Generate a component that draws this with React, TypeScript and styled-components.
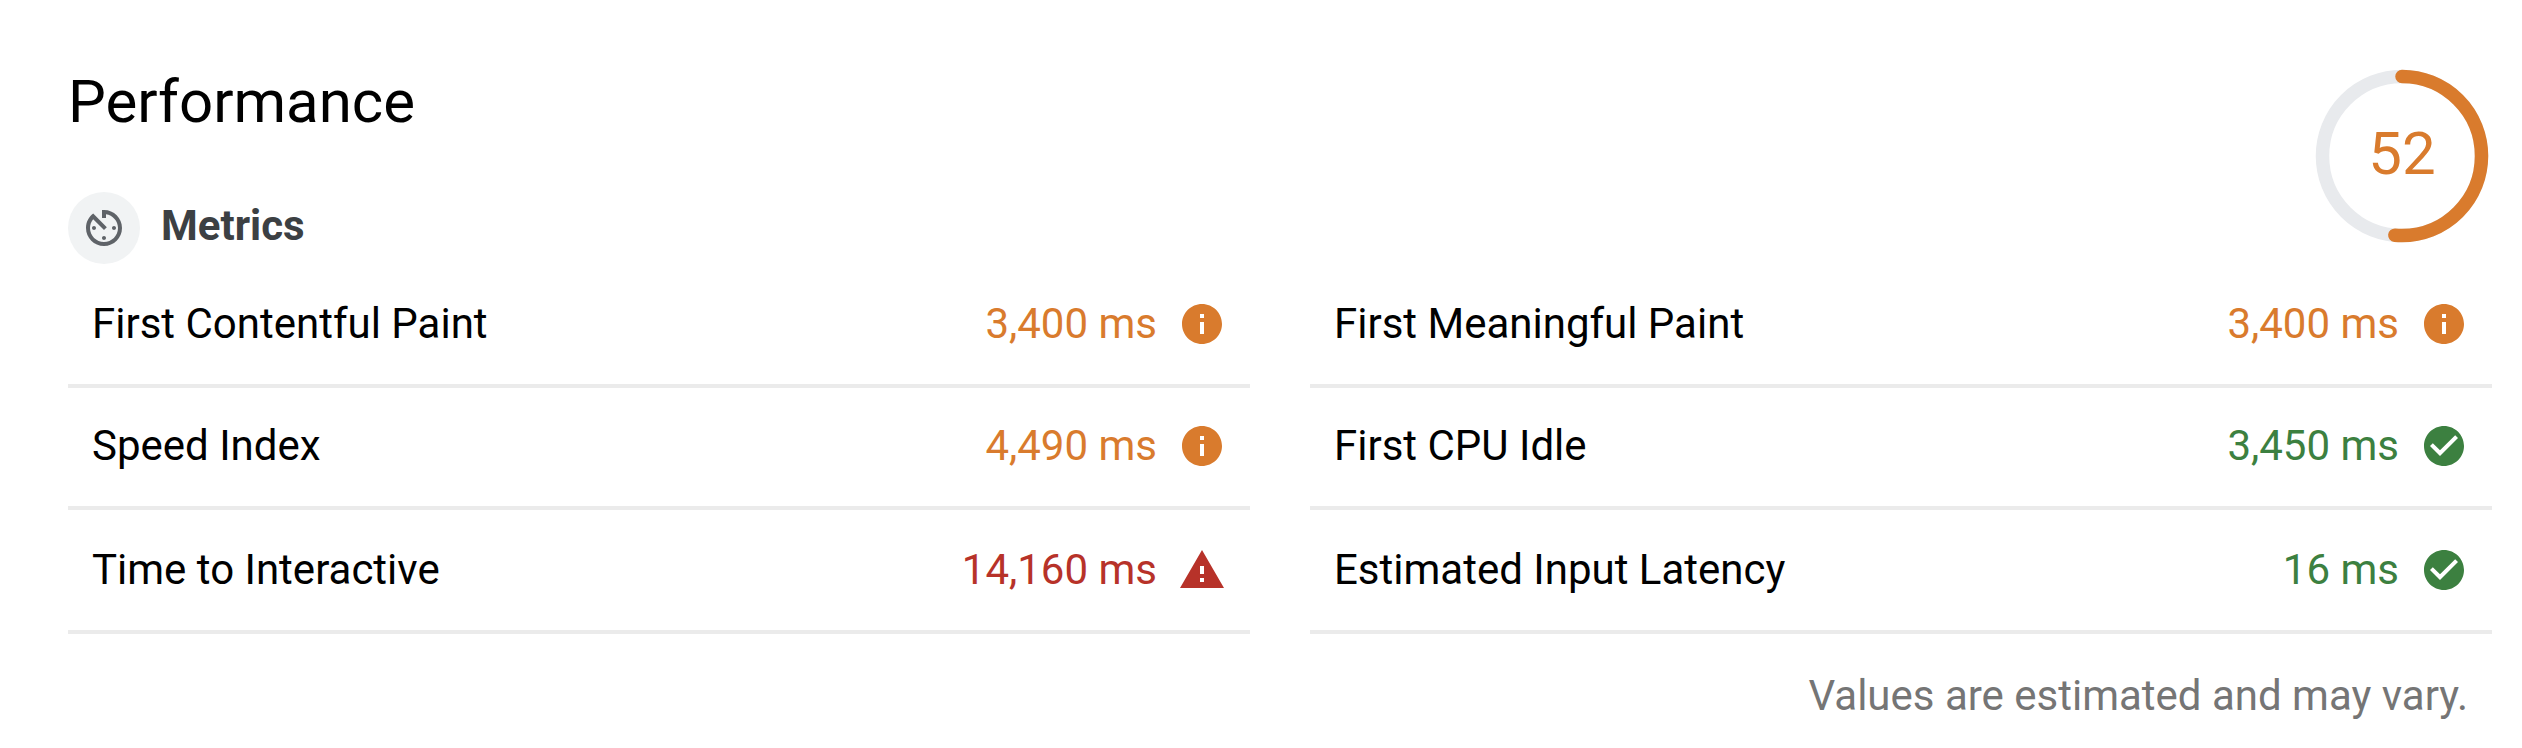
import React from "react";
import styled, { createGlobalStyle } from "styled-components";

type Rating = "pass" | "average" | "fail";

const ratingColors: Record<Rating, string> = {
  pass: "#3c8040",
  average: "#d97b2d",
  fail: "#b73229",
};

const ratingPaths: Record<Rating, string> = {
  pass: "M24 4C12.95 4 4 12.95 4 24c0 11.04 8.95 20 20 20 11.04 0 20-8.96 20-20 0-11.05-8.96-20-20-20zm-4 30L10 24l2.83-2.83L20 28.34l15.17-15.17L38 16 20 34z",
  average:
    "M24 4C12.95 4 4 12.95 4 24s8.95 20 20 20 20-8.95 20-20S35.05 4 24 4zm2 30h-4V22h4v12zm0-16h-4v-4h4v4z",
  fail: "M2 42h44L24 4 2 42zm24-6h-4v-4h4v4zm0-8h-4v-8h4v8z",
};

const GlobalStyle = createGlobalStyle`
  body {
    margin: 0;
    background: #fff;
  }
`;

const Page = styled.main`
  box-sizing: border-box;
  height: 748px;
  padding: 66px 30px 0 68px;
  overflow: hidden;
  background: #fff;
  color: #000;
  font-family: Roboto, "Liberation Sans", sans-serif;
  font-size: 42px;
  line-height: 48px;
`;

const Header = styled.header`
  display: flex;
  justify-content: space-between;
  height: 198px;
`;

const Headings = styled.div`
  display: flex;
  flex-direction: column;
  justify-content: space-between;
`;

const Title = styled.h1`
  margin: 0;
  padding-top: 1px;
  font-size: 60px;
  font-weight: 400;
  line-height: 70px;
`;

const GroupHeader = styled.div`
  display: flex;
  align-items: center;
  gap: 21px;
`;

const GroupIcon = styled.span`
  display: flex;
  align-items: center;
  justify-content: center;
  width: 72px;
  height: 72px;
  border-radius: 50%;
  background: #f1f3f4;
  color: #5f6368;
`;

const GroupTitle = styled.h2`
  margin: 0;
  padding-bottom: 4px;
  color: #3c4043;
  font-size: 42px;
  font-weight: 700;
  line-height: 48px;
`;

const Gauge = styled.div`
  display: grid;
  place-items: center;
  width: 180px;
  height: 180px;

  > * {
    grid-area: 1 / 1;
  }
`;

const Score = styled.span`
  padding-bottom: 4px;
  color: ${ratingColors.average};
  font-size: 60px;
  line-height: 70px;
`;

const Columns = styled.div`
  display: grid;
  grid-template-columns: 1fr 1fr;
  column-gap: 60px;
`;

const Metric = styled.div<{ $height: number }>`
  box-sizing: border-box;
  display: flex;
  align-items: flex-end;
  height: ${(p) => p.$height}px;
  padding: 0 24px 36px;
  border-bottom: 4px solid #ebebeb;
`;

const MetricName = styled.span`
  flex: 1;
`;

const MetricValue = styled.span<{ $rating: Rating }>`
  margin-right: 21px;
  color: ${(p) => ratingColors[p.$rating]};
`;

const RatingIcon = styled.svg<{ $rating: Rating }>`
  display: block;
  width: 48px;
  height: 48px;
  fill: ${(p) => ratingColors[p.$rating]};
`;

const Note = styled.p`
  margin: 38px 24px 0;
  color: #757575;
  text-align: right;
`;

interface MetricData {
  name: string;
  value: string;
  rating: Rating;
}

const columns: MetricData[][] = [
  [
    { name: "First Contentful Paint", value: "3,400 ms", rating: "average" },
    { name: "Speed Index", value: "4,490 ms", rating: "average" },
    { name: "Time to Interactive", value: "14,160 ms", rating: "fail" },
  ],
  [
    { name: "First Meaningful Paint", value: "3,400 ms", rating: "average" },
    { name: "First CPU Idle", value: "3,450 ms", rating: "pass" },
    { name: "Estimated Input Latency", value: "16 ms", rating: "pass" },
  ],
];

const rowHeights = [124, 122, 124];

const ScoreGauge = ({ score }: { score: number }) => (
  <Gauge>
    <svg width="180" height="180" viewBox="0 0 120 120" fill="none" strokeWidth="9">
      <circle cx="60" cy="60" r="53" stroke="#e8eaed" />
      <circle
        cx="60"
        cy="60"
        r="53"
        stroke={ratingColors.average}
        strokeLinecap="round"
        strokeDasharray={`${(score / 100) * 329} 400`}
        transform="rotate(-90 60 60)"
      />
    </svg>
    <Score>{score}</Score>
  </Gauge>
);

export default function App() {
  return (
    <>
      <GlobalStyle />
      <Page>
        <Header>
          <Headings>
            <Title>Performance</Title>
            <GroupHeader>
              <GroupIcon>
                <svg width="48" height="48" viewBox="0 0 24 24" fill="currentColor">
                  <path d="M11 17c0 .55.45 1 1 1s1-.45 1-1-.45-1-1-1-1 .45-1 1zm0-14v4h2V5.08c3.39.49 6 3.39 6 6.92 0 3.87-3.13 7-7 7s-7-3.13-7-7c0-1.68.59-3.22 1.58-4.42L12 13l1.41-1.41-6.8-6.8v.02C4.42 6.45 3 9.05 3 12c0 4.97 4.02 9 9 9 4.97 0 9-4.03 9-9s-4.03-9-9-9h-1zm7 9c0-.55-.45-1-1-1s-1 .45-1 1 .45 1 1 1 1-.45 1-1zM6 12c0 .55.45 1 1 1s1-.45 1-1-.45-1-1-1-1 .45-1 1z" />
                </svg>
              </GroupIcon>
              <GroupTitle>Metrics</GroupTitle>
            </GroupHeader>
          </Headings>
          <ScoreGauge score={52} />
        </Header>
        <Columns>
          {columns.map((metrics, c) => (
            <div key={c}>
              {metrics.map((m, i) => (
                <Metric key={m.name} $height={rowHeights[i]}>
                  <MetricName>{m.name}</MetricName>
                  <MetricValue $rating={m.rating}>{m.value}</MetricValue>
                  <RatingIcon $rating={m.rating} viewBox="0 0 48 48">
                    <path d={ratingPaths[m.rating]} />
                  </RatingIcon>
                </Metric>
              ))}
            </div>
          ))}
        </Columns>
        <Note>Values are estimated and may vary.</Note>
      </Page>
    </>
  );
}
